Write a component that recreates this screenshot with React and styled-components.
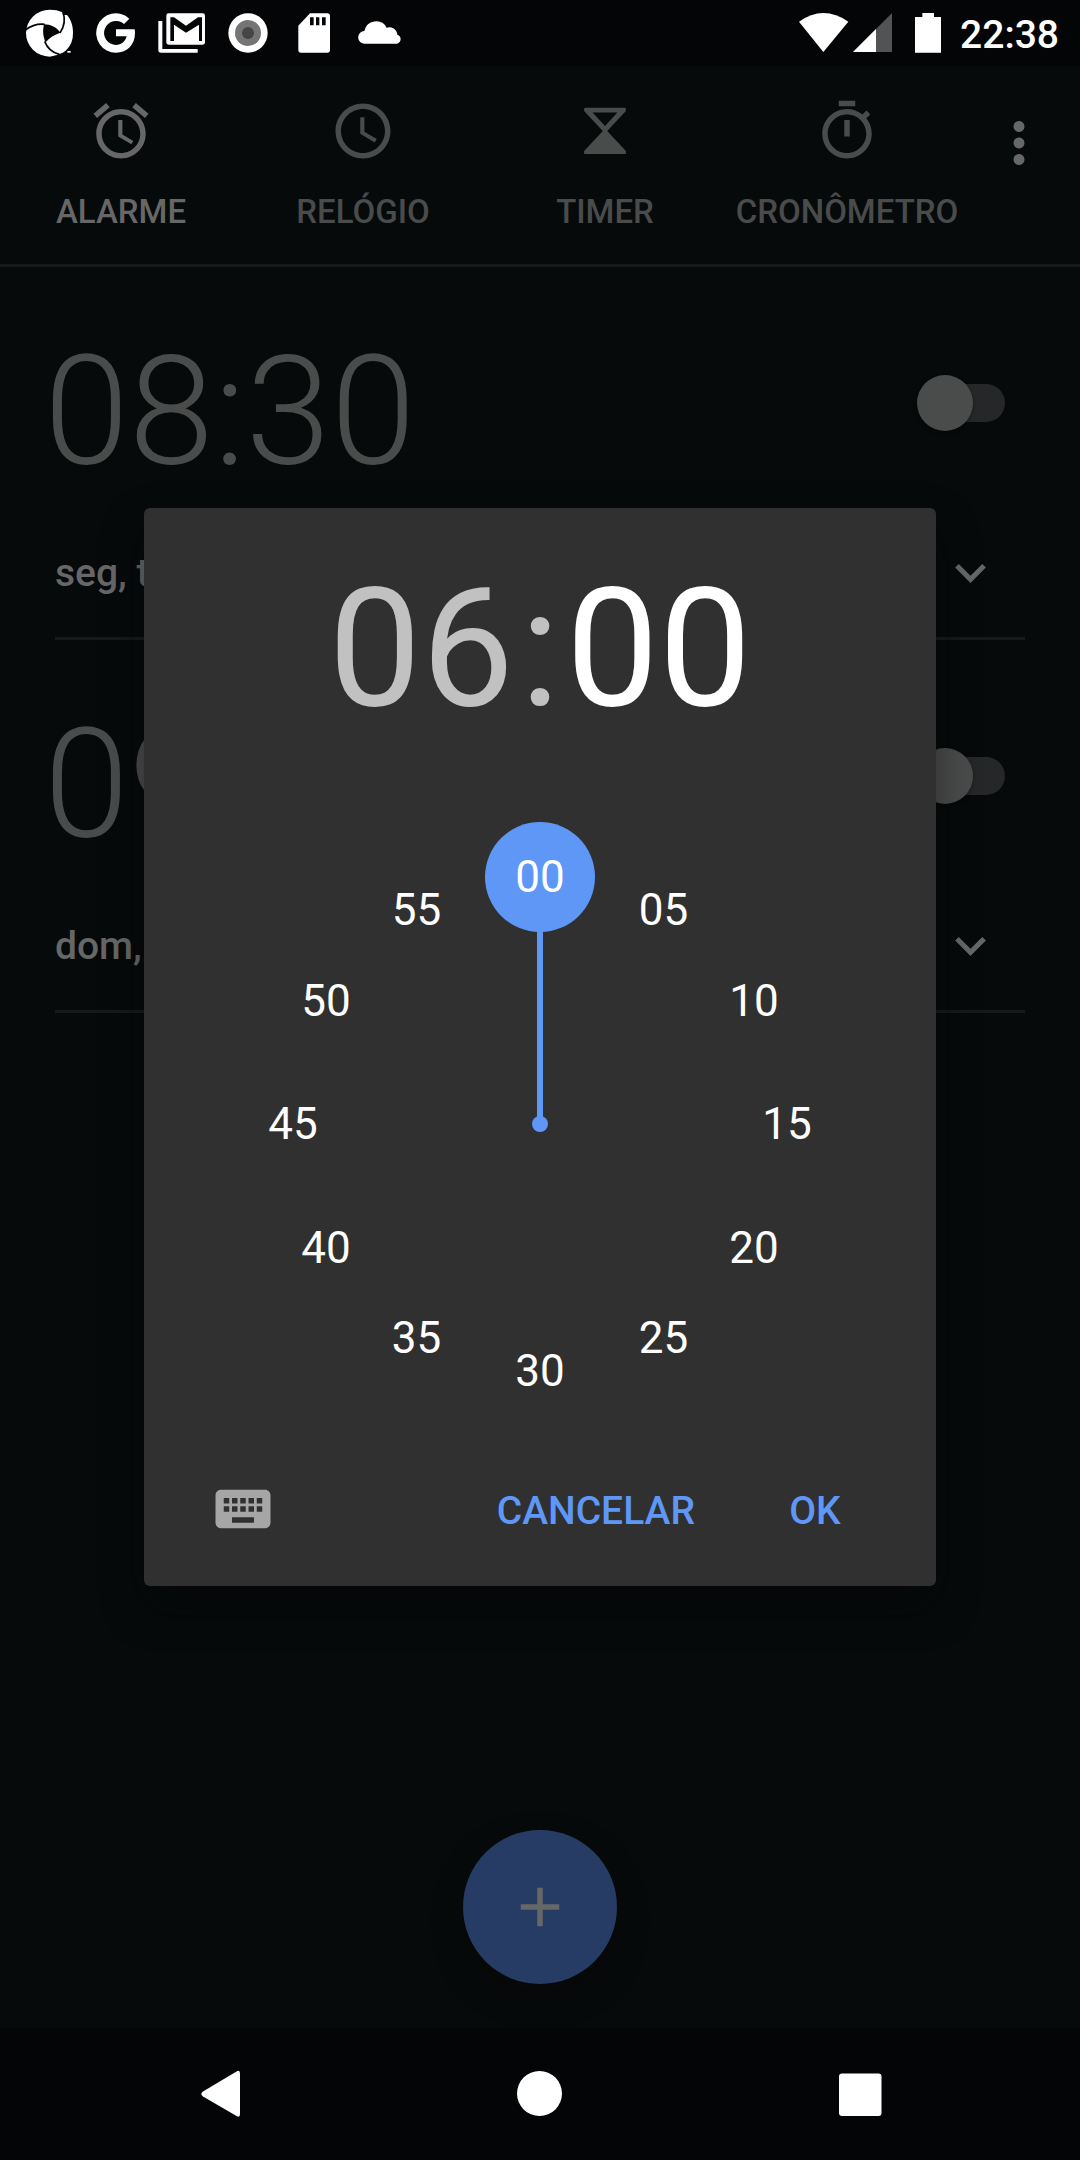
import React, { useState } from "react";
import styled, { createGlobalStyle } from "styled-components";

const c = {
  page: "#060a0b",
  bar: "#040506",
  line: "#17191a",
  strong: "#676767",
  dim: "#4a4b4b",
  track: "#262728",
  dialog: "#303030",
  accent: "#5e97f6",
  accentDim: "#263c64",
  hour: "#c1c1c1",
  keyboard: "#a6a6a6",
};

const GlobalStyle = createGlobalStyle`
  *, *::before, *::after { box-sizing: border-box; }
  body {
    margin: 0;
    background: ${c.page};
    font-family: Roboto, "Noto Sans", sans-serif;
    color: #fff;
  }
  button { font: inherit; color: inherit; background: none; border: 0; padding: 0; cursor: pointer; }
  svg { display: block; }
`;

const Screen = styled.div`
  position: relative;
  display: flex;
  flex-direction: column;
  min-height: 100vh;
`;

/* ---------- system bars ---------- */

const StatusBar = styled.header`
  display: flex;
  align-items: center;
  justify-content: space-between;
  height: 66px;
  padding: 0 21px 0 17px;
  background: ${c.bar};
`;

const StatusGroup = styled.div`
  display: flex;
  align-items: center;
`;

const Glyph = styled.svg`
  width: ${(p) => p.$w || 66}px;
  height: ${(p) => p.$h || 66}px;
  fill: currentColor;
`;

const StatusTime = styled.time`
  height: 66px;
  margin-left: 9px;
  font-size: 39px;
  font-weight: 500;
  line-height: 70px;
`;

const NavBar = styled.nav`
  display: flex;
  justify-content: center;
  height: 132px;
  background: ${c.bar};
`;

const NavButton = styled.button`
  display: grid;
  place-items: center;
  flex: 0 1 320px;
`;

/* ---------- tabs ---------- */

const AppBar = styled.div`
  display: flex;
  align-items: flex-start;
  border-bottom: 3px solid ${c.line};
`;

const Tabs = styled.div`
  display: grid;
  grid-template-columns: repeat(4, 1fr);
  flex: 1;
`;

const Tab = styled.button`
  display: flex;
  flex-direction: column;
  align-items: center;
  gap: 28px;
  && { padding: 32px 0; }
  && { color: ${(p) => (p["aria-selected"] ? c.strong : c.dim)}; }
`;

const TabLabel = styled.span`
  font-size: 33px;
  font-weight: 500;
  line-height: 40px;
`;

const MenuButton = styled.button`
  display: grid;
  place-items: center;
  width: 102px;
  height: 154px;
  margin-right: 10px;
  && { color: ${c.strong}; }
`;

/* ---------- alarms ---------- */

const Main = styled.main`
  display: flex;
  flex: 1;
  flex-direction: column;
`;

const AlarmList = styled.ul`
  margin: 0;
  padding: 0 55px;
  list-style: none;
`;

const AlarmItem = styled.li`
  display: flex;
  flex-direction: column;
  gap: 51px;
  padding: 68px 20px 31px 0;
  border-bottom: 3px solid ${c.line};
`;

const AlarmRow = styled.div`
  display: flex;
  align-items: flex-start;
  justify-content: space-between;
`;

const AlarmTime = styled.button`
  && {
    margin-left: -11px;
    font-size: 153px;
    font-weight: 300;
    line-height: 154px;
    color: ${c.dim};
  }
`;

const SwitchLabel = styled.label`
  display: flex;
  align-items: center;
  height: 136px;
`;

const Switch = styled.input`
  appearance: none;
  position: relative;
  width: 74px;
  height: 38px;
  margin: 0;
  border-radius: 19px;
  background: ${c.track};

  &::before {
    content: "";
    position: absolute;
    top: -9px;
    left: ${(p) => (p.checked ? 32 : -14)}px;
    width: 56px;
    height: 56px;
    border-radius: 50%;
    background: ${(p) => (p.checked ? c.accentDim : c.dim)};
    box-shadow: 0 2px 4px rgba(0, 0, 0, 0.3);
  }
`;

const Days = styled.span`
  font-size: 39px;
  font-weight: 500;
  line-height: 66px;
  color: ${c.strong};
`;

const ExpandButton = styled.button`
  display: grid;
  place-items: center;
  width: 70px;
  height: 66px;
  && { color: ${c.strong}; }
`;

const AddButton = styled.button`
  display: grid;
  place-items: center;
  align-self: center;
  width: 154px;
  height: 154px;
  margin: auto 0 44px;
  border-radius: 50%;
  box-shadow: 0 14px 28px rgba(12, 6, 6, 0.5);
  && { background: ${c.accentDim}; color: ${c.strong}; }
`;

/* ---------- time picker ---------- */

const Overlay = styled.div`
  position: absolute;
  inset: 66px 0 132px;
  display: grid;
  place-items: center;
`;

const Dialog = styled.section`
  width: min(792px, calc(100% - 64px));
  border-radius: 6px;
  background: ${c.dialog};
  box-shadow: 0 20px 44px rgba(8, 4, 4, 0.4);
`;

const DialogTime = styled.div`
  display: flex;
  align-items: center;
  justify-content: center;
  gap: 6px;
  height: 280px;
  padding-top: 2px;
  font-size: 165px;
  line-height: 194px;
  color: ${c.hour};
`;

const TimePart = styled.button`
  && { color: ${(p) => (p.$active ? "#fff" : c.hour)}; }
`;

const Dial = styled.div`
  position: relative;
  width: 672px;
  max-width: 100%;
  height: 672px;
  margin: 0 auto;
`;

const Hand = styled.svg`
  display: block;
  width: 100%;
  height: 100%;
  fill: ${c.accent};
`;

const Minute = styled.button`
  position: absolute;
  width: 110px;
  height: 110px;
  transform: translate(-50%, -50%);
  && {
    font-size: 44px;
    line-height: 110px;
    color: #fff;
  }
`;

const Actions = styled.div`
  display: flex;
  align-items: center;
  height: 126px;
  padding: 0 33px 28px 66px;
`;

const KeyboardButton = styled.button`
  margin-right: auto;
  && { color: ${c.keyboard}; }
`;

const TextButton = styled.button`
  min-width: 176px;
  height: 98px;
  && {
    padding: 4px 32px 0;
    font-size: 39px;
    font-weight: 500;
    color: ${c.accent};
  }
`;

/* ---------- icon paths on a 24 unit grid ---------- */

const paths = {
  alarm:
    "M22 5.72l-4.6-3.86-1.29 1.53 4.6 3.86L22 5.72zM7.88 3.39L6.6 1.86 2 5.71l1.29 1.53 4.59-3.85zM12.5 8H11v6l4.75 2.85.75-1.23-4-2.37V8zM12 4c-4.97 0-9 4.03-9 9s4.02 9 9 9c4.97 0 9-4.03 9-9s-4.03-9-9-9zm0 16c-3.87 0-7-3.13-7-7s3.13-7 7-7 7 3.13 7 7-3.13 7-7 7z",
  clock:
    "M11.99 2C6.47 2 2 6.48 2 12s4.47 10 9.99 10C17.52 22 22 17.52 22 12S17.52 2 11.99 2zM12 20c-4.42 0-8-3.58-8-8s3.58-8 8-8 8 3.58 8 8-3.58 8-8 8zm.5-13H11v6l5.25 3.15.75-1.23-4.5-2.67z",
  hourglass:
    "M4.9 3.5H19.1Q19.6 3.5 19.6 4V4.7L12.8 12 19.6 19.3V20.4H4.4V19.3L11.2 12 4.4 4.7V4Q4.4 3.5 4.9 3.5ZM7.5 5.3L12 10.2 16.5 5.3Z",
  stopwatch:
    "M15 1H9v2h6V1zm-4 13h2V8h-2v6zm8.03-6.61l1.42-1.42c-.43-.51-.9-.99-1.41-1.41l-1.42 1.42C16.07 4.74 14.12 4 12 4c-4.97 0-9 4.03-9 9s4.02 9 9 9 9-4.03 9-9c0-2.12-.74-4.07-1.97-5.61zM12 20c-3.87 0-7-3.13-7-7s3.13-7 7-7 7 3.13 7 7-3.13 7-7 7z",
  more:
    "M12 8c1.1 0 2-.9 2-2s-.9-2-2-2-2 .9-2 2 .9 2 2 2zm0 2c-1.1 0-2 .9-2 2s.9 2 2 2 2-.9 2-2-.9-2-2-2zm0 6c-1.1 0-2 .9-2 2s.9 2 2 2 2-.9 2-2-.9-2-2-2z",
  add: "M19 13h-6v6h-2v-6H5v-2h6V5h2v6h6v2z",
  keyboard:
    "M20 5H4c-1.1 0-1.99.9-1.99 2L2 17c0 1.1.9 2 2 2h16c1.1 0 2-.9 2-2V7c0-1.1-.9-2-2-2zm-9 3h2v2h-2V8zm0 3h2v2h-2v-2zM8 8h2v2H8V8zm0 3h2v2H8v-2zm-1 2H5v-2h2v2zm0-3H5V8h2v2zm9 7H8v-2h8v2zm0-4h-2v-2h2v2zm0-3h-2V8h2v2zm3 3h-2v-2h2v2zm0-3h-2V8h2v2z",
};

const Icon = ({ name }) => (
  <Glyph viewBox="0 0 24 24" aria-hidden="true">
    <path fillRule="evenodd" d={paths[name]} />
  </Glyph>
);

const Notifications = () => (
  <StatusGroup>
    <Glyph viewBox="51 0 198 198" aria-hidden="true">
      <path d="M149 29C163 29 177 31 187 37L190 45H201C213 58 219 78 219 99A70 70 0 0 1 197 152L188 158 171 165L149 170A71 71 0 0 1 78 99A71 71 0 0 1 149 29Z" />
      <path fill={c.bar} d="M132 73C152 73 170 82 181 98C163 104 148 113 137 127C128 108 128 90 132 73Z" />
      <path
        fill="none"
        stroke={c.bar}
        strokeWidth="5"
        d="M76 90C96 75 115 71 134 73M188 33C197 58 193 80 180 99M134 124C142 145 158 158 178 163"
      />
      <path d="M202 153h10v5h-10z" />
    </Glyph>
    <Glyph viewBox="249 0 198 198" aria-hidden="true">
      <path d="M404 88H348V109H380C376 125 364 135 348 135A36 36 0 1 1 372 72L388 56A59 59 0 1 0 348 158C382 158 405 134 405 99Q405 93 404 88Z" />
    </Glyph>
    <Glyph viewBox="447 0 198 198" aria-hidden="true">
      <path d="M475 63H487V147H593V158H483Q475 158 475 150Z" />
      <rect x="499" y="40" width="116" height="94" rx="7" />
      <path
        fill={c.bar}
        d="M511 52H522L558 77 594 52H606V123H597V74L558 98 522 74V123H511Z"
      />
    </Glyph>
    <Glyph viewBox="645 0 198 198" aria-hidden="true">
      <circle cx="744" cy="99" r="59" />
      <circle cx="744" cy="99" r="39" fill="#757575" />
      <circle cx="744" cy="99" r="18" fill="#454545" />
    </Glyph>
    <Glyph viewBox="843 0 198 198" aria-hidden="true">
      <path d="M930 40H982Q990 40 990 48V150Q990 158 982 158H903Q895 158 895 150V77Z" />
      <path fill={c.bar} d="M930 52h11v24h-11zM948 52h10v24h-10zM966 52h11v24h-11z" />
    </Glyph>
    <Glyph viewBox="1041 0 198 198" aria-hidden="true">
      <path d="M1094 131A19 19 0 0 1 1093 93A36 36 0 0 1 1160 83A24 24 0 0 1 1192 104A14 14 0 0 1 1191 131Z" />
    </Glyph>
  </StatusGroup>
);

const SystemStatus = () => (
  <StatusGroup>
    <Glyph $w={54} viewBox="45 0 162 198" aria-hidden="true">
      <path d="M57 65Q130 13 205 65L130 156Z" />
    </Glyph>
    <Glyph $w={60} viewBox="207 0 180 198" aria-hidden="true">
      <path fill="#525354" d="M219 156L336 39V156Z" />
      <path d="M219 156L288 87V156Z" />
    </Glyph>
    <Glyph $w={42} viewBox="387 0 126 198" aria-hidden="true">
      <path d="M427 39H462V51H483V158H405V51H427Z" />
    </Glyph>
    <StatusTime>22:38</StatusTime>
  </StatusGroup>
);

const tabs = [
  { icon: "alarm", label: "ALARME" },
  { icon: "clock", label: "RELÓGIO" },
  { icon: "hourglass", label: "TIMER" },
  { icon: "stopwatch", label: "CRONÔMETRO" },
];

const initialAlarms = [
  { time: "08:30", days: "seg, ter, qua", on: false },
  { time: "09:00", days: "dom, sáb", on: false },
];

const minutes = Array.from({ length: 12 }, (_, i) => i * 5);
const pad = (n) => String(n).padStart(2, "0");

/* Dial geometry, in units of the 672 unit wide face */
const FACE = 672;
const RING = 247;
const spot = (minute) => {
  const a = (minute / 30) * Math.PI;
  return {
    left: `${50 + (Math.sin(a) * RING * 100) / FACE}%`,
    top: `${50 - (Math.cos(a) * RING * 100) / FACE}%`,
  };
};

export default function App() {
  const [tab, setTab] = useState(0);
  const [alarms, setAlarms] = useState(initialAlarms);
  const [part, setPart] = useState("minute");
  const [minute, setMinute] = useState(0);

  const toggle = (index) =>
    setAlarms(alarms.map((a, i) => (i === index ? { ...a, on: !a.on } : a)));

  return (
    <>
      <GlobalStyle />
      <Screen>
        <StatusBar>
          <Notifications />
          <SystemStatus />
        </StatusBar>

        <Main>
          <AppBar>
            <Tabs role="tablist">
              {tabs.map((t, i) => (
                <Tab key={t.label} role="tab" aria-selected={i === tab} onClick={() => setTab(i)}>
                  <Icon name={t.icon} />
                  <TabLabel>{t.label}</TabLabel>
                </Tab>
              ))}
            </Tabs>
            <MenuButton aria-label="Mais opções">
              <Icon name="more" />
            </MenuButton>
          </AppBar>

          <AlarmList>
            {alarms.map((a, i) => (
              <AlarmItem key={a.time}>
                <AlarmRow>
                  <AlarmTime>{a.time}</AlarmTime>
                  <SwitchLabel>
                    <Switch
                      type="checkbox"
                      role="switch"
                      aria-label={`Alarme ${a.time}`}
                      checked={a.on}
                      onChange={() => toggle(i)}
                    />
                  </SwitchLabel>
                </AlarmRow>
                <AlarmRow>
                  <Days>{a.days}</Days>
                  <ExpandButton aria-label="Expandir alarme">
                    <Glyph $w={31} $h={19} viewBox="6 8.59 12 7.41" aria-hidden="true">
                      <path d="M16.59 8.59L12 13.17 7.41 8.59 6 10l6 6 6-6z" />
                    </Glyph>
                  </ExpandButton>
                </AlarmRow>
              </AlarmItem>
            ))}
          </AlarmList>

          <AddButton aria-label="Adicionar alarme">
            <Icon name="add" />
          </AddButton>
        </Main>

        <NavBar>
          <NavButton aria-label="Voltar">
            <Glyph viewBox="0 0 66 66" aria-hidden="true">
              <path d="M49.500 10.500Q53 8.500 53 12.500V53Q53 57 49.500 55L16 35.500Q12.500 33 16 30.500Z" />
            </Glyph>
          </NavButton>
          <NavButton aria-label="Início">
            <Glyph viewBox="0 0 66 66" aria-hidden="true">
              <circle cx="32.500" cy="32.500" r="22.500" />
            </Glyph>
          </NavButton>
          <NavButton aria-label="Recentes">
            <Glyph viewBox="0 0 66 66" aria-hidden="true">
              <rect x="12" y="12.500" width="42.500" height="42.500" rx="3" />
            </Glyph>
          </NavButton>
        </NavBar>

        <Overlay>
          <Dialog role="dialog" aria-label="Selecionar horário">
            <DialogTime>
              <TimePart $active={part === "hour"} onClick={() => setPart("hour")}>
                06
              </TimePart>
              <span>:</span>
              <TimePart $active={part === "minute"} onClick={() => setPart("minute")}>
                {pad(minute)}
              </TimePart>
            </DialogTime>

            <Dial>
              <Hand viewBox="0 0 672 672" aria-hidden="true">
                <g transform={`rotate(${minute * 6} 336 336)`}>
                  <circle cx="336" cy="89" r="55" />
                  <rect x="333" y="89" width="6" height="247" />
                  <circle cx="336" cy="336" r="8" />
                </g>
              </Hand>
              {minutes.map((m) => (
                <Minute key={m} style={spot(m)} onClick={() => setMinute(m)}>
                  {pad(m)}
                </Minute>
              ))}
            </Dial>

            <Actions>
              <KeyboardButton aria-label="Usar teclado">
                <Icon name="keyboard" />
              </KeyboardButton>
              <TextButton>CANCELAR</TextButton>
              <TextButton>OK</TextButton>
            </Actions>
          </Dialog>
        </Overlay>
      </Screen>
    </>
  );
}
